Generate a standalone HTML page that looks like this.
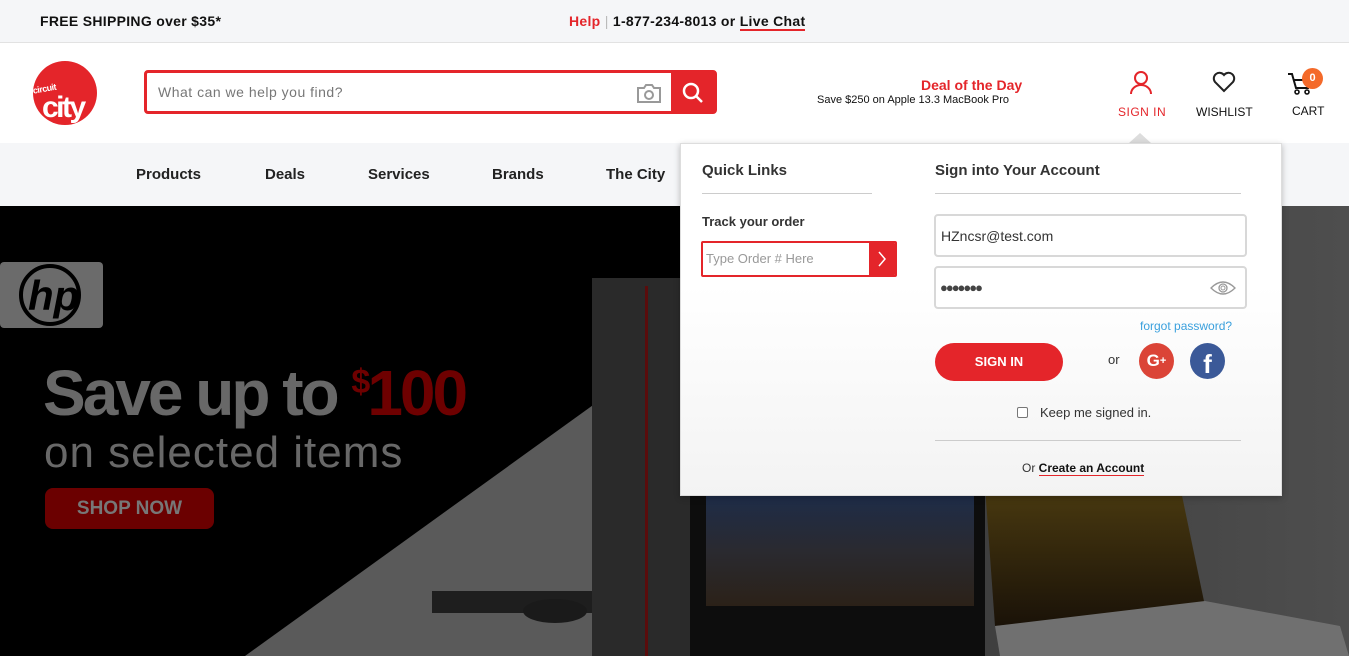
<!DOCTYPE html>
<html><head><meta charset="utf-8"><style>
*{margin:0;padding:0;box-sizing:border-box}
body{width:1349px;height:656px;overflow:hidden;font-family:"Liberation Sans",Arial,sans-serif;background:#fff;position:relative}
.top{height:43px;background:#f5f6f8;border-bottom:1px solid #e2e2e2;position:relative;font-weight:bold;font-size:14px;color:#111}
.top .l{position:absolute;left:40px;top:13px;letter-spacing:.3px}
.top .c{position:absolute;left:569px;top:13px;letter-spacing:.3px}
.red{color:#e4252a}
.hdr{position:absolute;top:43px;left:0;width:1349px;height:100px;background:#fff}
.nav{position:absolute;top:143px;left:0;width:1349px;height:63px;background:#f5f6f8}
.nav span{position:absolute;top:23px;font-size:15px;font-weight:bold;color:#222}
.hero{position:absolute;top:206px;left:0;width:1349px;height:450px;background:#000;overflow:hidden}
.panel{position:absolute;left:680px;top:143px;width:602px;height:353px;background:linear-gradient(#fff 40%,#f3f3f3);border:1px solid #ddd;box-shadow:0 2px 6px rgba(0,0,0,.25)}
.panel .h{position:absolute;font-size:15px;font-weight:bold;color:#333}
.line{position:absolute;height:1px;background:#ccc}
.inp{position:absolute;border:2px solid #d8d8d8;border-radius:4px;background:#fff;font-size:14px;color:#333}
</style></head><body>
<div class="top"><span class="l">FREE SHIPPING over $35*</span>
<span class="c"><span class="red">Help</span> <span style="color:#bbb;font-weight:normal">|</span> 1-877-234-8013 or <span style="border-bottom:2px solid #e4252a">Live Chat</span></span></div>
<div class="hdr">
 <svg style="position:absolute;left:33px;top:18px" width="66" height="66" viewBox="0 0 66 66"><circle cx="32" cy="32" r="32" fill="#e4252a"/><text x="0" y="31" font-size="9" font-weight="bold" fill="#fff" font-family="Liberation Sans" letter-spacing="-0.5" transform="rotate(-10 10 30)">circuit</text><text x="9" y="56" font-size="30" font-weight="bold" fill="#fff" font-family="Liberation Sans" letter-spacing="-2.5" transform="scale(1 1)">city</text></svg>
 <div style="position:absolute;left:144px;top:27px;width:573px;height:44px;border:3px solid #e4252a;border-radius:4px;background:#fff">
  <span style="position:absolute;left:11px;top:11px;font-size:14px;color:#777;letter-spacing:.5px">What can we help you find?</span>
  <svg style="position:absolute;left:489px;top:9px" width="26" height="22" viewBox="0 0 26 22"><path d="M2 6h6l2-3h6l2 3h6v14H2z" fill="none" stroke="#999" stroke-width="2"/><circle cx="13" cy="13" r="4" fill="none" stroke="#999" stroke-width="2"/></svg>
  <div style="position:absolute;right:0;top:0;width:43px;height:38px;background:#e4252a"><svg style="position:absolute;left:11px;top:9px" width="22" height="22" viewBox="0 0 22 22"><circle cx="9" cy="9" r="7" fill="none" stroke="#fff" stroke-width="2.5"/><path d="M14 14l6 6" stroke="#fff" stroke-width="2.5"/></svg></div>
 </div>
 <div style="position:absolute;left:921px;top:34px;font-size:14px;font-weight:bold;color:#e4252a">Deal of the Day</div>
 <div style="position:absolute;left:817px;top:51px;font-size:11px;color:#111">Save $250 on Apple 13.3 MacBook Pro</div>
 <svg style="position:absolute;left:1129px;top:27px" width="24" height="24" viewBox="0 0 24 24"><circle cx="12" cy="8" r="6" fill="none" stroke="#e4252a" stroke-width="2"/><path d="M2 24a10 9 0 0 1 20 0" fill="none" stroke="#e4252a" stroke-width="2"/></svg>
 <div style="position:absolute;left:1118px;top:62px;font-size:12px;color:#e4252a;letter-spacing:.5px">SIGN IN</div>
 <svg style="position:absolute;left:1212px;top:28px" width="24" height="22" viewBox="0 0 24 22"><path d="M12 20L3 11A5 5 0 0 1 12 4A5 5 0 0 1 21 11Z" fill="none" stroke="#222" stroke-width="2"/></svg>
 <div style="position:absolute;left:1196px;top:62px;font-size:12px;color:#111">WISHLIST</div>
 <svg style="position:absolute;left:1287px;top:29px" width="26" height="24" viewBox="0 0 26 24"><path d="M1 2h4l4 14h13" fill="none" stroke="#111" stroke-width="2"/><path d="M7 8h14l-2 6" fill="none" stroke="#111" stroke-width="2"/><circle cx="10" cy="20" r="2" fill="none" stroke="#111" stroke-width="1.6"/><circle cx="20" cy="20" r="2" fill="none" stroke="#111" stroke-width="1.6"/></svg>
 <div style="position:absolute;left:1302px;top:25px;width:21px;height:21px;border-radius:50%;background:#f46a2a;color:#fff;font-size:11px;font-weight:bold;text-align:center;line-height:21px">0</div>
 <div style="position:absolute;left:1292px;top:61px;font-size:12px;color:#111">CART</div>
 <div style="position:absolute;left:1129px;top:90px;width:0;height:0;border-left:11px solid transparent;border-right:11px solid transparent;border-bottom:10px solid #ddd"></div>
</div>
<div class="nav"><span style="left:136px">Products</span><span style="left:265px">Deals</span><span style="left:368px">Services</span><span style="left:492px">Brands</span><span style="left:606px">The City</span></div>
<div class="hero">
 <svg width="1349" height="450" style="position:absolute;left:0;top:0">
  <defs><linearGradient id="g" x1="0" x2="1"><stop offset="0" stop-color="#333"/><stop offset="1" stop-color="#4e4e4e"/></linearGradient>
  <linearGradient id="sky" x1="0" y1="0" x2="0" y2="1"><stop offset="0" stop-color="#1e2c48"/><stop offset=".5" stop-color="#2a2a30"/><stop offset="1" stop-color="#2b2118"/></linearGradient>
  <linearGradient id="lava" x1="0" y1="0" x2="0" y2="1"><stop offset="0" stop-color="#4a3a10"/><stop offset="1" stop-color="#1a1208"/></linearGradient></defs>
  <rect width="1349" height="450" fill="#000"/>
  <polygon points="700,0 1349,0 1349,450 700,450" fill="url(#g)"/>
  <polygon points="245,450 700,122 700,450" fill="#5a5a5a"/>
  <rect x="0" y="56" width="103" height="66" rx="4" fill="#6b6b6b"/>
  <circle cx="50" cy="89" r="29" fill="none" stroke="#000" stroke-width="4"/>
  <text x="28" y="104" font-size="42" font-style="italic" font-weight="bold" fill="#000" font-family="Liberation Sans">hp</text>
  <rect x="432" y="385" width="165" height="22" fill="#1e1e1e"/>
  <ellipse cx="555" cy="405" rx="32" ry="12" fill="#1a1a1a"/>
  <rect x="592" y="72" width="98" height="378" fill="#2a2a2a"/>
  <rect x="645" y="80" width="3" height="370" fill="#5a0c0c"/>
  <rect x="690" y="270" width="295" height="180" fill="#0d0d0d"/>
  <rect x="706" y="290" width="268" height="110" fill="url(#sky)"/>
  <polygon points="985,280 1180,280 1205,400 995,420" fill="url(#lava)"/>
  <polygon points="995,420 1205,395 1340,420 1349,450 1000,450" fill="#707070"/>
 </svg>
 <div style="position:absolute;left:43px;top:150px;font-size:64px;font-weight:bold;color:#686868;letter-spacing:-3px">Save up to <span style="color:#6e0000"><sup style="font-size:34px;vertical-align:22px">$</sup>100</span></div>
 <div style="position:absolute;left:44px;top:222px;font-size:44px;color:#686868;letter-spacing:1px">on selected items</div>
 <div style="position:absolute;left:45px;top:282px;width:169px;height:41px;border-radius:8px;background:#6b0000;color:#777;font-size:19px;font-weight:bold;text-align:center;line-height:41px">SHOP NOW</div>
</div>
<div class="panel">
 <div class="h" style="left:21px;top:18px">Quick Links</div>
 <div class="line" style="left:21px;top:49px;width:170px"></div>
 <div style="position:absolute;left:21px;top:70px;font-size:13px;font-weight:bold;color:#333">Track your order</div>
 <div style="position:absolute;left:20px;top:97px;width:196px;height:36px;border:2px solid #e4252a;border-radius:2px;background:#fff">
  <span style="position:absolute;left:3px;top:8px;font-size:13px;color:#999">Type Order # Here</span>
  <div style="position:absolute;right:0;top:-2px;width:26px;height:36px;background:#e4252a;border-radius:0 3px 3px 0"><svg style="position:absolute;left:8px;top:10px" width="10" height="16"><path d="M2 1l6 7-6 7" fill="none" stroke="#fff" stroke-width="1.5"/></svg></div>
 </div>
 <div class="h" style="left:254px;top:18px">Sign into Your Account</div>
 <div class="line" style="left:254px;top:49px;width:306px"></div>
 <div class="inp" style="left:253px;top:70px;width:313px;height:43px"><span style="position:absolute;left:5px;top:12px">HZncsr@test.com</span></div>
 <div class="inp" style="left:253px;top:122px;width:313px;height:43px"><span style="position:absolute;left:4px;top:12px;font-size:13px;letter-spacing:-2px;color:#444">●●●●●●●</span>
 <svg style="position:absolute;left:274px;top:12px" width="26" height="16"><path d="M1 8Q13 -4 25 8Q13 20 1 8Z" fill="none" stroke="#999" stroke-width="1.3"/><circle cx="13" cy="8" r="4" fill="none" stroke="#999" stroke-width="1.3"/><circle cx="13" cy="8" r="2" fill="none" stroke="#999"/></svg></div>
 <div style="position:absolute;left:459px;top:175px;font-size:12px;color:#3aa0dd">forgot password?</div>
 <div style="position:absolute;left:254px;top:199px;width:128px;height:38px;border-radius:19px;background:#e4252a;color:#fff;font-size:13px;font-weight:bold;text-align:center;line-height:38px">SIGN IN</div>
 <div style="position:absolute;left:427px;top:208px;font-size:13px;color:#333">or</div>
 <div style="position:absolute;left:458px;top:199px;width:35px;height:36px;border-radius:50%;background:#db4437;color:#fff;font-weight:bold;font-size:17px;line-height:36px;text-align:center">G<span style="font-size:11px;vertical-align:2px">+</span></div>
 <div style="position:absolute;left:509px;top:199px;width:35px;height:36px;border-radius:50%;background:#3b5998;color:#fff;font-weight:bold;font-size:26px;line-height:42px;text-align:center">f</div>
 <div style="position:absolute;left:336px;top:263px;width:11px;height:11px;border:1px solid #777;border-radius:2px;background:#fff"></div>
 <div style="position:absolute;left:359px;top:261px;font-size:13px;color:#333">Keep me signed in.</div>
 <div class="line" style="left:254px;top:296px;width:306px"></div>
 <div style="position:absolute;left:341px;top:317px;font-size:12px;color:#333">Or <b style="color:#111;border-bottom:1px solid #e4252a">Create an Account</b></div>
</div>
</body></html>
